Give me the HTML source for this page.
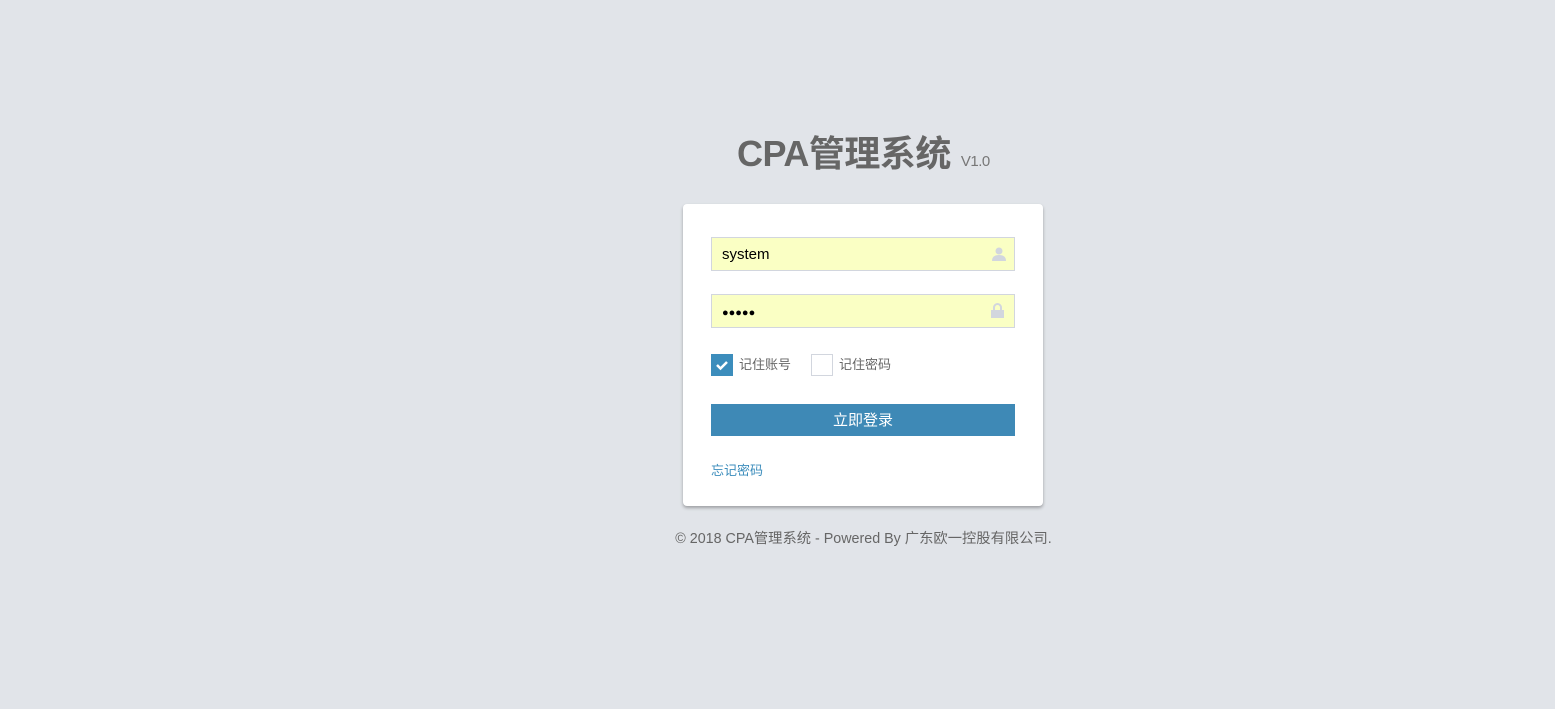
<!DOCTYPE html>
<html><head><meta charset="utf-8"><style>
body{margin:0;width:1555px;height:709px;background:#e1e4e9;font-family:"Liberation Sans","Noto Sans CJK SC",sans-serif;position:relative;overflow:hidden}
.t{position:absolute;left:737px;top:132px;font-size:36px;font-weight:bold;color:#666;line-height:44px;white-space:nowrap;letter-spacing:-0.5px}
.t small{font-size:15px;font-weight:normal;color:#777;margin-left:10px;letter-spacing:-0.5px}
.card{position:absolute;left:683px;top:204px;width:360px;height:302px;background:#fff;border-radius:4px;box-shadow:0 2px 3px rgba(0,0,0,.3)}
.in{position:absolute;left:28px;width:302px;height:32px;background:#faffc4;border:1px solid #d2d6de;font-size:15px;line-height:33px;color:#000}
.in span{margin-left:10px}
.cb{position:absolute;top:150px;width:22px;height:22px;box-sizing:border-box}
.lbl{position:absolute;top:152px;font-size:13px;color:#666;line-height:18px}
.btn{position:absolute;left:28px;top:200px;width:304px;height:32px;background:#3e89b6;color:#fff;text-align:center;line-height:33px;font-size:15px}
.fg{position:absolute;left:28px;top:256px;font-size:13px;color:#3c8dbc}
.ft{position:absolute;left:0;width:1555px;text-align:center;padding-left:172px;box-sizing:border-box;top:527px;font-size:14.3px;color:#666}
</style></head><body>
<div class="t">CPA管理系统<small>V1.0</small></div>
<div class="card">
<div class="in" style="top:33px"><span>system</span>
<svg style="position:absolute;right:8px;top:9px" width="14" height="14" viewBox="0 0 14 14"><circle cx="7" cy="4" r="3.5" fill="#d2d6de"/><path d="M0 14 Q0 8 7 8 Q14 8 14 14Z" fill="#d2d6de"/></svg></div>
<div class="in" style="top:90px"><span style="font-size:11px;letter-spacing:0">●●●●●</span>
<svg style="position:absolute;right:10px;top:8px" width="13" height="15" viewBox="0 0 13 15"><path d="M3 7V4.5a3.5 3.5 0 0 1 7 0V7" stroke="#d2d6de" stroke-width="2" fill="none"/><rect x="0" y="7" width="13" height="8" fill="#d2d6de"/></svg></div>
<div class="cb" style="left:28px;background:#3c8dbc"><svg width="22" height="22"><path d="M6 11l3.5 3.5L16 8" stroke="#fff" stroke-width="2.5" fill="none"/></svg></div>
<div class="lbl" style="left:56px">记住账号</div>
<div class="cb" style="left:128px;border:1px solid #d2d6de"></div>
<div class="lbl" style="left:156px">记住密码</div>
<div class="btn">立即登录</div>
<div class="fg">忘记密码</div>
</div>
<div class="ft">© 2018 CPA管理系统 - Powered By 广东欧一控股有限公司.</div>
</body></html>
